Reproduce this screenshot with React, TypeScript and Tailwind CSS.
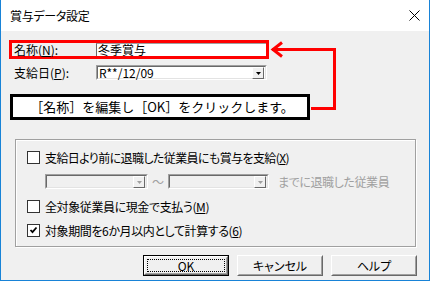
import React from "react";

const font = "font-['MS_UI_Gothic','Noto_Sans_CJK_JP',sans-serif] [font-feature-settings:'palt']";

function DropBtn({ disabled }: { disabled?: boolean }) {
  return (
    <div className="w-[12px] h-[12px] my-auto mr-[1px] bg-[#f0f0f0] border border-t-white border-l-white border-r-[#696969] border-b-[#696969] flex items-center justify-center">
      <svg width="5" height="3" viewBox="0 0 5 3">
        <path d="M0 0h5L2.5 3z" fill={disabled ? "#a0a0a0" : "#000"} />
      </svg>
    </div>
  );
}

function Combo({ w, text, disabled }: { w: string; text?: string; disabled?: boolean }) {
  return (
    <div
      className={`${w} h-[15px] flex border border-t-[#a0a0a0] border-l-[#a0a0a0] border-r-white border-b-white ${
        disabled ? "bg-[#f0f0f0]" : "bg-white"
      }`}
    >
      <div className="flex-1 flex border border-t-[#696969] border-l-[#696969] border-r-[#e3e3e3] border-b-[#e3e3e3]">
        <div className="flex-1 text-[12px] leading-[11px] pl-[1px] text-black">{text}</div>
        <DropBtn disabled={disabled} />
      </div>
    </div>
  );
}

function Check({ checked }: { checked?: boolean }) {
  return (
    <div className="w-[13px] h-[13px] bg-white border border-[#333] flex items-center justify-center shrink-0">
      {checked && (
        <svg width="9" height="9" viewBox="0 0 9 9">
          <path d="M1.5 4l2 2.2L7.5 1.5" stroke="#000" strokeWidth="1.8" fill="none" />
        </svg>
      )}
    </div>
  );
}

function Btn({ label, def }: { label: string; def?: boolean }) {
  return (
    <div className={`w-[86px] h-[21px] ${def ? "border border-black" : ""}`}>
      <div className="w-full h-full bg-[#f0f0f0] border border-t-white border-l-white border-r-[#696969] border-b-[#696969] flex">
        <div className="flex-1 flex border border-t-[#f0f0f0] border-l-[#f0f0f0] border-r-[#a0a0a0] border-b-[#a0a0a0] items-center justify-center p-[1px]">
          <div
            className={`w-full h-full flex items-center justify-center text-[12px] leading-[12px] text-black ${
              def ? "border border-dotted border-black" : ""
            }`}
          >
            {label}
          </div>
        </div>
      </div>
    </div>
  );
}

export default function App() {
  return (
    <div className={`relative w-[430px] h-[281px] bg-[#f0f0f0] border-l border-r border-b border-[#1883d7] flex flex-col ${font}`}>
      <div className="h-[31px] bg-white flex items-center justify-between pl-[9px] pr-[9px]">
        <span className="text-[12px] text-black font-['Noto_Sans_CJK_JP',sans-serif] tracking-[-0.3px]">賞与データ設定</span>
        <svg width="11" height="11" viewBox="0 0 11 11">
          <path d="M0.5 0.5L10.5 10.5M10.5 0.5L0.5 10.5" stroke="#000" strokeWidth="1" />
        </svg>
      </div>

      <div className="flex flex-col">
        <div className="ml-[8px] mt-[9px] w-[260px] h-[19px] border-[3px] border-[#ff0000] flex">
          <div className="w-[84px] pl-[2px] text-[12px] leading-[13px] text-black">
            名称(<span className="underline">N</span>):
          </div>
          <div className="w-[170px] bg-white border-l border-t border-l-[#696969] border-t-[#a0a0a0] text-[12px] leading-[12px] pl-[1px] text-black">
            冬季賞与
          </div>
        </div>

        <div className="ml-[13px] mt-[6px] flex items-center h-[15px]">
          <div className="w-[82px] text-[12px] text-black">
            支給日(<span className="underline">P</span>):
          </div>
          <Combo w="w-[171px]" text="R**/12/09" />
        </div>

        <div className="ml-[9px] mt-[14px] w-[300px] h-[26px] border-[3px] border-black bg-white flex items-center justify-center">
          <span className="text-[13px] leading-[16px] text-black font-['Noto_Sans_CJK_JP',sans-serif] [font-feature-settings:normal] pl-[4px]">
            ［名称］を編集し［OK］をクリックします。
          </span>
        </div>

        <div className="ml-[14px] mt-[19px] w-[401px] h-[108px] border border-[#a0a0a0] shadow-[inset_1px_1px_0_#fff,1px_1px_0_#fff] pl-[11px] pt-[11px] flex flex-col">
          <div className="flex items-center h-[13px] gap-[5px]">
            <Check />
            <span className="text-[12px] text-black whitespace-nowrap tracking-[-0.6px]">
              支給日より前に退職した従業員にも賞与を支給(<span className="underline">X</span>)
            </span>
          </div>
          <div className="flex items-center h-[15px] mt-[10px] pl-[18px]">
            <Combo w="w-[103px]" disabled />
            <span className="w-[20px] text-center text-[12px] text-[#a0a0a0]">～</span>
            <Combo w="w-[101px]" disabled />
            <span className="ml-[9px] text-[12px] text-[#a0a0a0] whitespace-nowrap tracking-[-0.4px]">までに退職した従業員</span>
          </div>
          <div className="flex items-center h-[13px] mt-[11px] gap-[5px]">
            <Check />
            <span className="text-[12px] text-black whitespace-nowrap tracking-[-0.4px]">
              全対象従業員に現金で支払う(<span className="underline">M</span>)
            </span>
          </div>
          <div className="flex items-center h-[13px] mt-[11px] gap-[5px]">
            <Check checked />
            <span className="text-[12px] text-black whitespace-nowrap tracking-[-0.4px]">
              対象期間を6か月以内として計算する(<span className="underline">6</span>)
            </span>
          </div>
        </div>

        <div className="mt-[8px] flex justify-end gap-[8px] pr-[12px]">
          <Btn label="OK" def />
          <Btn label="キャンセル" />
          <Btn label="ヘルプ" />
        </div>
      </div>

      <svg className="absolute left-0 top-0 pointer-events-none" width="430" height="281" viewBox="0 0 430 281">
        <path d="M271 49.5H333.5V108.5H310" stroke="#ff0000" strokeWidth="3" fill="none" />
        <path d="M281 42.5L272 49.5L281 56.5" stroke="#ff0000" strokeWidth="3" fill="none" />
      </svg>
    </div>
  );
}
